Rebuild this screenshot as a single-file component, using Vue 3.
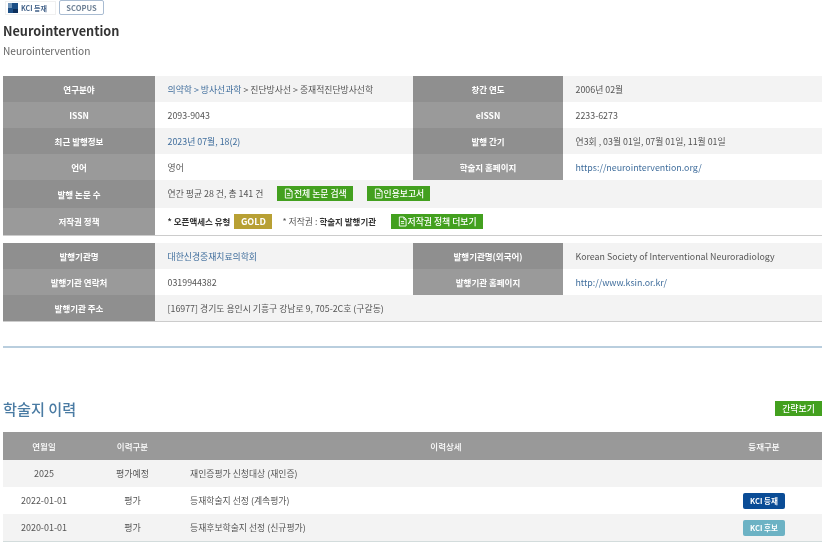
<script setup>
const docIcon = 'M1.5 .5h5l2.5 2.5v7.5h-7.5z M6.5 .5v2.5h2.5 M3.2 5.5h3.6 M3.2 7.5h3.6'
const history = [
  { date: '2025', type: '평가예정', detail: '재인증평가 신청대상 (재인증)', badge: '', cls: '' },
  { date: '2022-01-01', type: '평가', detail: '등재학술지 선정 (계속평가)', badge: 'KCI 등재', cls: 'dark' },
  { date: '2020-01-01', type: '평가', detail: '등재후보학술지 선정 (신규평가)', badge: 'KCI 후보', cls: 'teal' }
]
</script>

<template>
  <div class="page">
    <div class="badges">
      <span class="kci">
        <svg width="10" height="10" viewBox="0 0 10 10"><rect width="10" height="10" fill="#1d4f86"/><rect x="0" y="0" width="4" height="5" fill="#6f93b8"/><rect x="5" y="6" width="5" height="4" fill="#0d2f5c"/></svg>
        <span>KCI 등재</span>
      </span>
      <span class="scopus">SCOPUS</span>
    </div>
    <h1>Neurointervention</h1>
    <p class="sub">Neurointervention</p>

    <table class="info first">
      <colgroup><col class="c1"><col class="c2"><col class="c3"><col></colgroup>
      <tbody>
        <tr>
          <th>연구분야</th>
          <td><a>의약학 &gt; 방사선과학</a> &gt; 진단방사선 &gt; 중재적진단방사선학</td>
          <th>창간 연도</th>
          <td>2006년 02월</td>
        </tr>
        <tr>
          <th class="lt">ISSN</th><td>2093-9043</td>
          <th class="lt">eISSN</th><td>2233-6273</td>
        </tr>
        <tr>
          <th>최근 발행정보</th><td><a>2023년 07월, 18(2)</a></td>
          <th>발행 간기</th><td>연3회 , 03월 01일, 07월 01일, 11월 01일</td>
        </tr>
        <tr>
          <th class="lt">언어</th><td>영어</td>
          <th class="lt">학술지 홈페이지</th><td><a>https://neurointervention.org/</a></td>
        </tr>
        <tr class="tall">
          <th>발행 논문 수</th>
          <td colspan="3">
            <div class="line">
              <span>연간 평균 28 건, 총 141 건</span>
              <button class="btn m1"><svg width="9" height="11" viewBox="0 0 10 11"><path :d="docIcon" fill="none" stroke="#fff" stroke-width="1"/></svg>전체 논문 검색</button>
              <button class="btn m2"><svg width="9" height="11" viewBox="0 0 10 11"><path :d="docIcon" fill="none" stroke="#fff" stroke-width="1"/></svg>인용보고서</button>
            </div>
          </td>
        </tr>
        <tr class="tall">
          <th class="lt">저작권 정책</th>
          <td colspan="3">
            <div class="line">
              <b class="dark-text">* 오픈액세스 유형</b>
              <span class="gold">GOLD</span>
              <span class="copy">* 저작권 : <b class="dark-text">학술지 발행기관</b></span>
              <button class="btn m3"><svg width="9" height="11" viewBox="0 0 10 11"><path :d="docIcon" fill="none" stroke="#fff" stroke-width="1"/></svg>저작권 정책 더보기</button>
            </div>
          </td>
        </tr>
      </tbody>
    </table>

    <table class="info second">
      <colgroup><col class="c1"><col class="c2"><col class="c3"><col></colgroup>
      <tbody>
        <tr>
          <th>발행기관명</th><td><a>대한신경중재치료의학회</a></td>
          <th>발행기관명(외국어)</th><td>Korean Society of Interventional Neuroradiology</td>
        </tr>
        <tr>
          <th class="lt">발행기관 연락처</th><td>0319944382</td>
          <th class="lt">발행기관 홈페이지</th><td><a>http://www.ksin.or.kr/</a></td>
        </tr>
        <tr>
          <th>발행기관 주소</th>
          <td colspan="3">[16977] 경기도 용인시 기흥구 강남로 9, 705-2C호 (구갈동)</td>
        </tr>
      </tbody>
    </table>

    <hr class="divider">

    <div class="head">
      <h2>학술지 이력</h2>
      <button class="btn simple">간략보기</button>
    </div>

    <table class="hist">
      <colgroup><col class="h1"><col class="h2"><col><col class="h4"></colgroup>
      <thead>
        <tr><th>연월일</th><th>이력구분</th><th class="th-detail">이력상세</th><th>등재구분</th></tr>
      </thead>
      <tbody>
        <tr v-for="row in history" :key="row.date">
          <td class="ctr">{{ row.date }}</td>
          <td class="ctr">{{ row.type }}</td>
          <td class="detail">{{ row.detail }}</td>
          <td class="ctr"><span v-if="row.badge" class="tag" :class="row.cls">{{ row.badge }}</span></td>
        </tr>
      </tbody>
    </table>
  </div>
</template>

<style scoped>
.page {
  width: 826px;
  height: 545px;
  box-sizing: border-box;
  padding: 0 4px 0 3px;
  overflow: hidden;
  background: #fff;
  font-family: "Noto Sans CJK KR", "Noto Sans", sans-serif;
  font-size: 8.85px;
  color: #555;
  filter: blur(0.4px);
}
.badges {
  display: flex;
  align-items: center;
  gap: 3px;
  height: 15px;
  padding-left: 2px;
}
.kci {
  display: flex;
  align-items: center;
  gap: 3px;
  width: 51px;
  height: 14px;
  padding-left: 2px;
  box-sizing: border-box;
  font-size: 7px;
  font-weight: 700;
  color: #44638a;
  border: 1px solid #f0f0f0;
}
.scopus {
  width: 45px;
  height: 15px;
  box-sizing: border-box;
  border: 1px solid #a9bcd2;
  border-radius: 2px;
  font-size: 7.5px;
  font-weight: 700;
  color: #6c7f94;
  display: flex;
  align-items: center;
  justify-content: center;
}
h1 {
  margin: 7px 0 0;
  font-size: 12.7px;
  line-height: 18px;
  font-weight: 700;
  color: #333;
}
.sub {
  margin: 3px 0 0;
  font-size: 10.15px;
  line-height: 16px;
  color: #666;
}
table {
  width: 819px;
  border-collapse: collapse;
  table-layout: fixed;
}
.info.first { margin-top: 17px; border-bottom: 1px solid #ccc; }
.info.second { margin-top: 7px; border-bottom: 1px solid #ccc; }
.c1 { width: 152px; }
.c2 { width: 258px; }
.c3 { width: 150px; }
.info th {
  height: 26px;
  padding: 0;
  background: #8f8f8f;
  color: #fff;
  font-size: 8.5px;
  font-weight: 700;
  text-align: center;
}
.info th.lt { background: #9a9a9a; }
.info td {
  height: 26px;
  padding: 0 0 0 12.5px;
  font-size: 8.85px;
  white-space: nowrap;
}
.info tr:nth-child(odd) td { background: #f3f3f3; }
.info tr.tall th, .info tr.tall td { height: 27.5px; }
a { color: #3f6d9c; }
.line {
  display: flex;
  align-items: center;
}
.dark-text { font-weight: 700; color: #333; font-size: 8.5px; }
.btn {
  display: inline-flex;
  align-items: center;
  justify-content: center;
  gap: 1px;
  height: 15px;
  padding: 0;
  border: 0;
  background: #43a01f;
  color: #fff;
  font-family: inherit;
  font-size: 8.85px;
  font-weight: 500;
}
.m1 { width: 76px; margin-left: 14px; }
.m2 { width: 63px; margin-left: 14px; }
.m3 { width: 92px; margin-left: 15px; }
.gold {
  width: 38px;
  height: 15px;
  margin-left: 4px;
  background: #b8a034;
  color: #fff;
  font-size: 9px;
  font-weight: 700;
  display: inline-flex;
  align-items: center;
  justify-content: center;
}
.copy { margin-left: 10px; }
.divider {
  margin: 24px 0 0;
  border: 0;
  border-top: 2px solid #b9cede;
}
.head {
  display: flex;
  justify-content: space-between;
  align-items: center;
  margin-top: 50px;
  height: 20px;
}
h2 {
  margin: 0;
  font-size: 15.2px;
  font-weight: 500;
  color: #4a7ba3;
}
.simple { width: 47px; }
.hist { margin-top: 14px; border-bottom: 1px solid #d3dcdc; }
.h1 { width: 82px; }
.h2 { width: 95px; }
.h4 { width: 116px; }
.hist th {
  height: 28px;
  padding: 0;
  background: #999;
  color: #fff;
  font-size: 8.5px;
  font-weight: 500;
  text-align: center;
}
.hist th.th-detail { padding-left: 6px; }
.hist td {
  height: 27px;
  padding: 0;
  font-size: 9px;
}
.hist tbody tr:nth-child(odd) td { background: #f3f3f3; }
.ctr { text-align: center; }
.hist td.detail { padding-left: 10px; font-size: 8.85px; }
.tag {
  display: inline-flex;
  width: 42px;
  height: 16px;
  align-items: center;
  justify-content: center;
  border-radius: 2px;
  color: #fff;
  font-size: 7.5px;
  font-weight: 700;
  vertical-align: middle;
}
.tag.dark { background: #0a4c96; }
.tag.teal { background: #6cb2c4; }
</style>
